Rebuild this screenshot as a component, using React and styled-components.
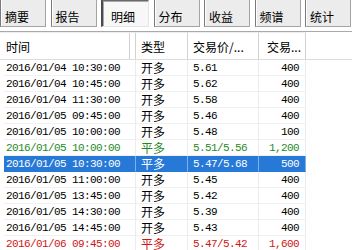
import styled, { createGlobalStyle } from "styled-components";

const GlobalStyle = createGlobalStyle`
  body {
    margin: 0;
    background: #ffffff;
    font-family: "Noto Sans CJK SC", sans-serif;
    overflow: hidden;
  }
`;

const Page = styled.div`
  width: 352px;
  height: 250px;
  overflow: hidden;
`;

const TabBar = styled.div`
  display: flex;
  gap: 4.5px;
  height: 27px;
  margin-bottom: 4px;
`;

const Tab = styled.div`
  box-sizing: border-box;
  width: ${(p) => (p.$active ? "48px" : "46px")};
  height: 27px;
  display: flex;
  align-items: center;
  padding: 6px 0 0 ${(p) => (p.$active ? "8px" : "4px")};
  font-size: 12px;
  color: #000;
  background: ${(p) => (p.$active ? "#f7f7f7" : "#ececec")};
  border-left: ${(p) => (p.$active ? "2px solid #4a4a4a" : "1px solid #7a7a7a")};
  border-top: ${(p) => (p.$active ? "1px solid #6a6a6a" : "none")};
  border-right: 1px solid ${(p) => (p.$active ? "#e4e4e4" : "#a4a4a4")};
  border-bottom: 1px solid ${(p) => (p.$active ? "#e4e4e4" : "#a4a4a4")};
  box-shadow: ${(p) => (p.$active ? "inset 1px 1px #a8a8a8" : "inset 1px 0 #ffffff")};
`;

const Grid = styled.div`
  border-top: 1px solid #a9a9a9;
`;

const HeaderRow = styled.div`
  display: flex;
  height: 27px;
  border-bottom: 1px solid #dcdcdc;
`;

const HeaderCell = styled.div`
  box-sizing: border-box;
  width: ${(p) => p.$w}px;
  display: flex;
  align-items: center;
  padding-left: ${(p) => p.$pl}px;
  font-size: 12px;
  color: #000;
  background: #fff;
  border-top: 1px solid #eeeeee;
  border-right: 1px solid #d2d2d2;
  box-shadow: ${(p) => (p.$split ? "inset -5px 0 #fff, inset -6px 0 #d2d2d2" : "none")};
  white-space: nowrap;
`;

const Row = styled.div`
  display: flex;
  height: 16px;
  padding-left: 4px;
`;

const colors = {
  normal: "#000000",
  green: "#1f8a1f",
  red: "#d01414",
};

const Cell = styled.div`
  box-sizing: border-box;
  width: ${(p) => p.$w}px;
  height: 16px;
  display: flex;
  align-items: center;
  justify-content: ${(p) => (p.$right ? "flex-end" : "flex-start")};
  padding-left: ${(p) => p.$pl || 0}px;
  padding-right: ${(p) => (p.$right ? 6 : 0)}px;
  font-family: ${(p) => (p.$cjk ? '"Noto Sans CJK SC", sans-serif' : '"Liberation Mono", monospace')};
  font-size: ${(p) => (p.$cjk ? 12 : 11)}px;
  letter-spacing: ${(p) => (p.$cjk ? 0 : -0.6)}px;
  color: ${(p) => (p.$selected ? "#fff" : colors[p.$tone])};
  background: ${(p) => (p.$selected ? "#2679d6" : "transparent")};
  border-right: 1px solid ${(p) => (p.$selected ? "#7fb0e8" : "#ececec")};
  border-bottom: 1px solid ${(p) => (p.$selected ? "#2679d6" : "#f0f0f0")};
  white-space: nowrap;
`;

const rows = [
  ["2016/01/04 10:30:00", "开多", "5.61", "400", "normal"],
  ["2016/01/04 10:45:00", "开多", "5.62", "400", "normal"],
  ["2016/01/04 11:30:00", "开多", "5.58", "400", "normal"],
  ["2016/01/05 09:45:00", "开多", "5.46", "400", "normal"],
  ["2016/01/05 10:00:00", "开多", "5.48", "100", "normal"],
  ["2016/01/05 10:00:00", "平多", "5.51/5.56", "1,200", "green"],
  ["2016/01/05 10:30:00", "平多", "5.47/5.68", "500", "normal", true],
  ["2016/01/05 11:00:00", "开多", "5.45", "400", "normal"],
  ["2016/01/05 13:45:00", "开多", "5.42", "400", "normal"],
  ["2016/01/05 14:30:00", "开多", "5.39", "400", "normal"],
  ["2016/01/05 14:45:00", "开多", "5.43", "400", "normal"],
  ["2016/01/06 09:45:00", "平多", "5.47/5.42", "1,600", "red"],
];

const tabs = ["摘要", "报告", "明细", "分布", "收益", "频谱", "统计"];

export default function App() {
  return (
    <Page>
      <GlobalStyle />
      <TabBar>
        {tabs.map((t) => (
          <Tab key={t} $active={t === "明细"}>
            {t}
          </Tab>
        ))}
      </TabBar>
      <Grid>
        <HeaderRow>
          <HeaderCell $w={136} $pl={6} $split>时间</HeaderCell>
          <HeaderCell $w={52} $pl={5}>类型</HeaderCell>
          <HeaderCell $w={71} $pl={5}>交易价/...</HeaderCell>
          <HeaderCell $w={47} $pl={8}>交易...</HeaderCell>
        </HeaderRow>
        {rows.map(([time, type, price, vol, tone, sel], i) => (
          <Row key={i}>
            <Cell $w={132} $pl={2} $tone={tone} $selected={sel}>{time}</Cell>
            <Cell $w={52} $pl={5} $cjk $tone={tone} $selected={sel}>{type}</Cell>
            <Cell $w={71} $pl={5} $tone={tone} $selected={sel}>{price}</Cell>
            <Cell $w={47} $right $tone={tone} $selected={sel}>{vol}</Cell>
          </Row>
        ))}
      </Grid>
    </Page>
  );
}
